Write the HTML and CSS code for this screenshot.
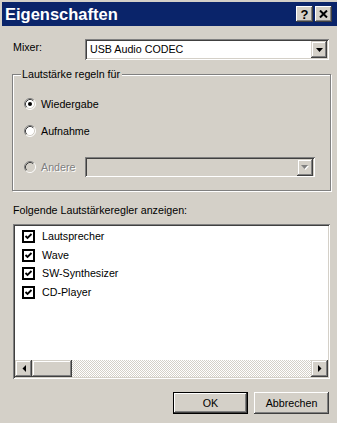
FILE: index.html
```html
<!DOCTYPE html>
<html lang="de">
<head>
    <meta charset="UTF-8">
    <title>Eigenschaften</title>
    <link rel="stylesheet" href="styles.css">
</head>
<body>
<div class="window">
    <div class="titlebar">
        <span class="title">Eigenschaften</span>
        <div class="caption-buttons">
            <span class="cap-btn help">?</span>
            <span class="cap-btn close">
                <svg width="9" height="8" viewBox="0 0 9 8"><path d="M1 0.5 L8 7.5 M8 0.5 L1 7.5" stroke="#000" stroke-width="2" fill="none"/></svg>
            </span>
        </div>
    </div>

    <div class="content">
        <div class="mixer-row">
            <span class="mixer-label">Mixer:</span>
            <div class="combo">
                <span class="combo-text">USB Audio CODEC</span>
                <span class="combo-btn">
                    <svg width="7" height="4" viewBox="0 0 7 4"><path d="M0 0 H7 L3.5 4 Z" fill="#000"/></svg>
                </span>
            </div>
        </div>

        <div class="group">
            <div class="group-title">Lautstärke regeln für</div>
            <div class="group-body">
                <div class="radio-row">
                    <svg class="radio" width="12" height="12" viewBox="0 0 12 12">
                        <circle cx="6" cy="6" r="5" fill="#fff"/>
                        <path d="M9.89 2.11 A5.5 5.5 0 0 0 2.11 9.89" stroke="#808080" fill="none"/>
                        <path d="M9.18 2.82 A4.5 4.5 0 0 0 2.82 9.18" stroke="#404040" fill="none"/>
                        <path d="M9.89 2.11 A5.5 5.5 0 0 1 2.11 9.89" stroke="#fff" fill="none"/>
                        <path d="M9.18 2.82 A4.5 4.5 0 0 1 2.82 9.18" stroke="#d4d0c8" fill="none"/>
                        <circle cx="6" cy="6" r="2" fill="#000"/>
                    </svg>
                    <span>Wiedergabe</span>
                </div>
                <div class="radio-row">
                    <svg class="radio" width="12" height="12" viewBox="0 0 12 12">
                        <circle cx="6" cy="6" r="5" fill="#fff"/>
                        <path d="M9.89 2.11 A5.5 5.5 0 0 0 2.11 9.89" stroke="#808080" fill="none"/>
                        <path d="M9.18 2.82 A4.5 4.5 0 0 0 2.82 9.18" stroke="#404040" fill="none"/>
                        <path d="M9.89 2.11 A5.5 5.5 0 0 1 2.11 9.89" stroke="#fff" fill="none"/>
                        <path d="M9.18 2.82 A4.5 4.5 0 0 1 2.82 9.18" stroke="#d4d0c8" fill="none"/>
                    </svg>
                    <span>Aufnahme</span>
                </div>
                <div class="radio-row other">
                    <svg class="radio" width="12" height="12" viewBox="0 0 12 12">
                        <circle cx="6" cy="6" r="5" fill="#d4d0c8"/>
                        <path d="M9.89 2.11 A5.5 5.5 0 0 0 2.11 9.89" stroke="#808080" fill="none"/>
                        <path d="M9.18 2.82 A4.5 4.5 0 0 0 2.82 9.18" stroke="#404040" fill="none"/>
                        <path d="M9.89 2.11 A5.5 5.5 0 0 1 2.11 9.89" stroke="#fff" fill="none"/>
                        <path d="M9.18 2.82 A4.5 4.5 0 0 1 2.82 9.18" stroke="#d4d0c8" fill="none"/>
                    </svg>
                    <span class="disabled">Andere</span>
                    <div class="combo combo-disabled">
                        <span class="combo-text"></span>
                        <span class="combo-btn">
                            <svg width="8" height="5" viewBox="0 0 8 5"><path d="M1 1 H8 L4.5 5 Z" fill="#fff"/><path d="M0 0 H7 L3.5 4 Z" fill="#808080"/></svg>
                        </span>
                    </div>
                </div>
            </div>
        </div>

        <div class="list-label">Folgende Lautstärkeregler anzeigen:</div>

        <div class="list">
            <div class="list-items">
                <div class="list-row">
                    <svg class="check" width="13" height="13" viewBox="0 0 13 13"><rect x="1" y="1" width="11" height="11" fill="#fff" stroke="#000" stroke-width="2"/><path d="M3.5 6 L5.5 8 L9.5 4" stroke="#000" stroke-width="1.8" fill="none"/></svg>
                    <span>Lautsprecher</span>
                </div>
                <div class="list-row">
                    <svg class="check" width="13" height="13" viewBox="0 0 13 13"><rect x="1" y="1" width="11" height="11" fill="#fff" stroke="#000" stroke-width="2"/><path d="M3.5 6 L5.5 8 L9.5 4" stroke="#000" stroke-width="1.8" fill="none"/></svg>
                    <span>Wave</span>
                </div>
                <div class="list-row">
                    <svg class="check" width="13" height="13" viewBox="0 0 13 13"><rect x="1" y="1" width="11" height="11" fill="#fff" stroke="#000" stroke-width="2"/><path d="M3.5 6 L5.5 8 L9.5 4" stroke="#000" stroke-width="1.8" fill="none"/></svg>
                    <span>SW-Synthesizer</span>
                </div>
                <div class="list-row">
                    <svg class="check" width="13" height="13" viewBox="0 0 13 13"><rect x="1" y="1" width="11" height="11" fill="#fff" stroke="#000" stroke-width="2"/><path d="M3.5 6 L5.5 8 L9.5 4" stroke="#000" stroke-width="1.8" fill="none"/></svg>
                    <span>CD-Player</span>
                </div>
            </div>
            <div class="hscroll">
                <span class="sb-btn">
                    <svg width="4" height="7" viewBox="0 0 4 7"><path d="M4 0 V7 L0.5 3.5 Z" fill="#000"/></svg>
                </span>
                <span class="sb-thumb"></span>
                <span class="sb-track"></span>
                <span class="sb-btn">
                    <svg width="4" height="7" viewBox="0 0 4 7"><path d="M0 0 V7 L3.5 3.5 Z" fill="#000"/></svg>
                </span>
            </div>
        </div>

        <div class="buttons">
            <button class="btn btn-default">OK</button>
            <button class="btn">Abbrechen</button>
        </div>
    </div>
</div>
</body>
</html>
```

FILE: styles.css
```css
body {
    margin: 0;
    background-color: #d4d0c8;
    font-family: "Liberation Sans", Arial, sans-serif;
    font-size: 10.7px;
    line-height: 13px;
    color: #000;
}
.window {
    padding: 2px 0 0 2px;
}

/* title bar */
.titlebar {
    height: 24px;
    background-color: #0a246a;
    display: flex;
    align-items: center;
    justify-content: space-between;
    padding: 0 5px 0 3px;
}
.title {
    color: #fff;
    font-weight: bold;
    font-size: 16.5px;
    line-height: 20px;
}
.caption-buttons {
    display: flex;
    gap: 2px;
}
.cap-btn {
    width: 17px;
    height: 16px;
    box-sizing: border-box;
    background-color: #d4d0c8;
    box-shadow: inset -1px -1px #404040, inset 1px 1px #fff, inset -2px -2px #808080;
    display: flex;
    align-items: center;
    justify-content: center;
}
.help {
    font-weight: bold;
    font-size: 13px;
    padding-top: 1px;
}

/* body */
.content {
    padding: 13px 7px 0 10px;
}
.mixer-row {
    display: flex;
    align-items: flex-start;
}
.mixer-label {
    width: 73px;
    padding: 2px 0 0 1px;
    box-sizing: border-box;
}
.combo {
    flex: 1;
    height: 21px;
    box-sizing: border-box;
    padding: 2px;
    background-color: #fff;
    box-shadow: inset 1px 1px #808080, inset -1px -1px #fff, inset 2px 2px #404040, inset -2px -2px #d4d0c8;
    display: flex;
    align-items: center;
    margin-right: 1px;
}
.combo-text {
    flex: 1;
    padding-left: 3px;
}
.combo-btn {
    width: 16px;
    height: 17px;
    box-sizing: border-box;
    background-color: #d4d0c8;
    box-shadow: inset -1px -1px #404040, inset 1px 1px #d4d0c8, inset -2px -2px #808080, inset 2px 2px #fff;
    display: flex;
    align-items: center;
    justify-content: center;
}

/* group box */
.group {
    margin-top: 14px;
    width: 317px;
    border: 1px solid #808080;
    box-shadow: inset 1px 1px #fff, 1px 1px #fff;
}
.group-title {
    width: fit-content;
    margin: -7px 0 0 8px;
    padding: 0 2px 0 1px;
    background-color: #d4d0c8;
}
.group-body {
    padding: 13px 0 13px 11px;
}
.radio-row {
    display: flex;
    align-items: center;
    height: 20px;
}
.radio-row + .radio-row {
    margin-top: 7px;
}
.radio-row.other {
    margin-top: 16px;
}
.radio {
    margin-right: 5px;
}
.disabled {
    color: #808080;
    text-shadow: 1px 1px #fff;
}
.combo-disabled {
    flex: none;
    width: 230px;
    height: 20px;
    margin-left: 10px;
    background-color: #d4d0c8;
}

/* list */
.list-label {
    margin-top: 13px;
    padding-left: 1px;
}
.list {
    margin-top: 7px;
    height: 155px;
    box-sizing: border-box;
    padding: 2px;
    margin-left: 1px;
    background-color: #fff;
    box-shadow: inset 1px 1px #808080, inset -1px -1px #fff, inset 2px 2px #404040, inset -2px -2px #d4d0c8;
    display: flex;
    flex-direction: column;
}
.list-items {
    flex: 1;
    padding: 1px 0 0 7px;
}
.list-row {
    display: flex;
    align-items: center;
    height: 18.7px;
}
.check {
    margin-right: 7px;
}
.hscroll {
    display: flex;
    height: 17px;
}
.sb-btn {
    width: 17px;
    box-sizing: border-box;
    background-color: #d4d0c8;
    box-shadow: inset -1px -1px #404040, inset 1px 1px #d4d0c8, inset -2px -2px #808080, inset 2px 2px #fff;
    display: flex;
    align-items: center;
    justify-content: center;
}
.sb-thumb {
    width: 40px;
    background-color: #d4d0c8;
    box-shadow: inset -1px -1px #404040, inset 1px 1px #d4d0c8, inset -2px -2px #808080, inset 2px 2px #fff;
}
.sb-track {
    flex: 1;
    background-image: conic-gradient(#fff 25%, #d4d0c8 0 50%, #fff 0 75%, #d4d0c8 0);
    background-size: 2px 2px;
}

/* buttons */
.buttons {
    display: flex;
    justify-content: flex-end;
    gap: 6px;
    margin-top: 13px;
    margin-right: 1px;
}
.btn {
    width: 75px;
    height: 22px;
    border: none;
    padding: 0;
    font: inherit;
    color: #000;
    background-color: #d4d0c8;
    box-shadow: inset -1px -1px #404040, inset 1px 1px #fff, inset -2px -2px #808080;
}
.btn-default {
    border: 1px solid #000;
}
```
